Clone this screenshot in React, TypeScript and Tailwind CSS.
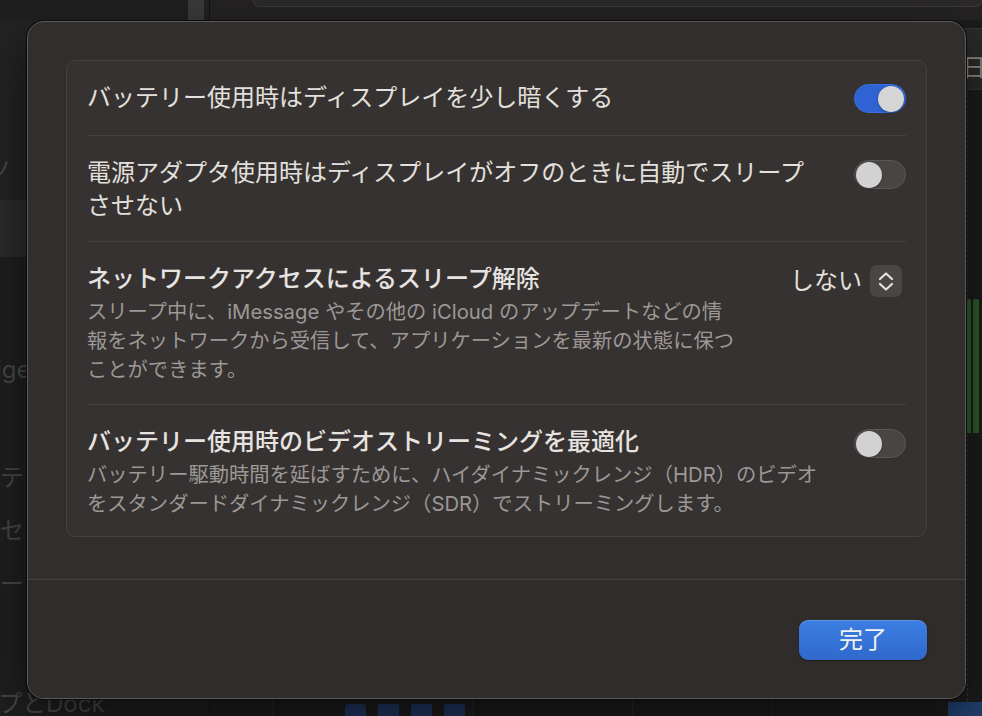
import React from "react";

function Toggle({ on }: { on?: boolean }) {
  if (on) {
    return (
      <div className="mt-[3px] flex h-[29px] w-[52px] shrink-0 items-center justify-end rounded-full border border-[#3b6fdc] bg-[#2f63d3] pr-[1px]">
        <div className="h-[26px] w-[26px] rounded-full bg-[#d5d5d5] shadow-[0_1px_2px_rgba(0,0,0,0.35)]" />
      </div>
    );
  }
  return (
    <div className="mt-[4px] flex h-[29px] w-[52px] shrink-0 items-center rounded-full border border-[#5a5654] bg-[#494543] pl-[1px]">
      <div className="h-[26px] w-[26px] rounded-full bg-[#d2d2d2] shadow-[0_1px_2px_rgba(0,0,0,0.35)]" />
    </div>
  );
}

function Stepper() {
  return (
    <div className="flex h-[32px] w-[32px] items-center justify-center rounded-[7px] bg-[#4a4644]">
      <svg width="32" height="32" viewBox="0 0 32 32" fill="none">
        <path d="M10 14 L16 8.5 L22 14" stroke="#e4e2e0" strokeWidth="2.2" strokeLinecap="round" strokeLinejoin="round" />
        <path d="M10 19 L16 24.5 L22 19" stroke="#e4e2e0" strokeWidth="2.2" strokeLinecap="round" strokeLinejoin="round" />
      </svg>
    </div>
  );
}

function Divider() {
  return <div className="mx-[20px] h-px bg-[#45413f]" />;
}

export default function App() {
  return (
    <div className="relative flex h-[716px] w-[982px] overflow-hidden bg-[#1c1c1c] font-[family-name:Inter,'Noto_Sans_CJK_JP',sans-serif]">
      {/* Sidebar (background window) */}
      <aside className="flex w-[210px] shrink-0 flex-col border-r border-[#111] bg-[#1f1f1f] text-[24px] leading-[30px] text-[#474747]">
        <div className="flex h-[20px] shrink-0">
          <div className="w-[188px] bg-[#202020]" />
          <div className="w-[16px] bg-[#3a3a3a]" />
          <div className="flex-1 bg-[#222]" />
        </div>
        <div className="flex h-[180px] shrink-0 flex-col bg-[#232323] pt-[135px]">
          <div className="-ml-[14px]">ツ</div>
        </div>
        <div className="h-[57px] shrink-0 bg-[#2b2b2b]" />
        <div className="flex flex-col pt-[98px]">
          <div className="-ml-[4px] h-[108px]">ige</div>
          <div className="-ml-[24px] h-[53px]">リテ</div>
          <div className="-ml-[24px] h-[53px]">ンセ</div>
          <div className="-ml-[24px] h-[120px]">ター</div>
          <div className="-ml-[2px] whitespace-nowrap">プとDock</div>
        </div>
      </aside>

      {/* Main area (background window) */}
      <main className="relative flex flex-1 flex-col bg-[#1c1c1c]">
        <div className="h-[20px] bg-[#242222]">
          <div className="ml-[43px] h-[7px] rounded-b-[8px] border-x border-b border-[#3c3a39] bg-[#2b2929]" />
        </div>
        <div className="absolute left-[750px] top-[28px] h-[62px] w-[30px] border-y border-[#353535] bg-[#2a2a2a] pl-[2px] pt-[24px] text-[24px] leading-[30px] text-[#8a8a8a]">
          日
        </div>
        <div className="absolute left-[757px] top-[90px] h-[626px] border-l border-dashed border-[#333]" />
        <div className="absolute left-[757px] top-[299px] flex gap-[2px]">
          <div className="h-[134px] w-[4px] rounded-t-[2px] bg-[#2e5a2a]" />
          <div className="h-[134px] w-[6px] rounded-t-[2px] bg-[#2e5a2a]" />
        </div>
        <div className="absolute left-[135px] top-[704px] flex gap-[12px]">
          <div className="h-[14px] w-[21px] rounded-t-[4px] bg-[#1f365f]" />
          <div className="h-[14px] w-[21px] bg-[#1f365f]" />
          <div className="h-[14px] w-[21px] bg-[#1f365f]" />
          <div className="h-[14px] w-[21px] bg-[#1f365f]" />
        </div>
        <div className="absolute left-[738px] top-[702px] h-[16px] w-[40px] bg-[#22406e]" />
        <div className="absolute left-[62px] top-[690px] h-[30px] border-l border-dashed border-[#2c2c2c]" />
        <div className="absolute left-[262px] top-[690px] h-[30px] border-l border-dashed border-[#2c2c2c]" />
        <div className="absolute left-[422px] top-[690px] h-[30px] border-l border-[#2a2a2a]" />
        <div className="absolute left-[562px] top-[690px] h-[30px] border-l border-dashed border-[#2c2c2c]" />
      </main>

      {/* Sheet dialog */}
      <div className="absolute left-[27px] top-[21px] flex h-[678px] w-[939px] flex-col overflow-hidden rounded-[17px] border border-[#5c5957] bg-[#312e2d] shadow-[0_0_0_1px_#0b0b0b,0_18px_50px_rgba(0,0,0,0.55)]">
        <div className="px-[38px] pb-[42px] pt-[38px]">
          <div className="rounded-[9px] border border-[#45413f] bg-[#363231]">
            {/* Row 1 */}
            <div className="flex items-start gap-[20px] px-[20px] pb-[21px] pt-[20px]">
              <div className="flex-1 text-[24px] leading-[33px] text-[#e3e0dd]">
                バッテリー使用時はディスプレイを少し暗くする
              </div>
              <Toggle on />
            </div>
            <Divider />
            {/* Row 2 */}
            <div className="flex items-start gap-[20px] px-[20px] pb-[19px] pt-[20px]">
              <div className="flex-1 whitespace-nowrap text-[24px] leading-[33px] text-[#e3e0dd]">
                電源アダプタ使用時はディスプレイがオフのときに自動でスリープ
                <br />
                させない
              </div>
              <Toggle />
            </div>
            <Divider />
            {/* Row 3 */}
            <div className="flex items-start gap-[20px] px-[20px] pb-[20px] pt-[20px]">
              <div className="flex-1">
                <div className="text-[24px] font-medium leading-[33px] text-[#e6e3e0]">
                  ネットワークアクセスによるスリープ解除
                </div>
                <div className="mt-[2px] whitespace-nowrap text-[20.3px] leading-[29px] text-[#9c9895]">
                  スリープ中に、iMessage やその他の iCloud のアップデートなどの情
                  <br />
                  報をネットワークから受信して、アプリケーションを最新の状態に保つ
                  <br />
                  ことができます。
                </div>
              </div>
              <div className="mr-[4px] mt-[3px] flex items-center gap-[8px]">
                <span className="text-[24px] leading-[32px] text-[#e3e0dd]">しない</span>
                <Stepper />
              </div>
            </div>
            <Divider />
            {/* Row 4 */}
            <div className="flex items-start gap-[20px] px-[20px] pb-[18px] pt-[20px]">
              <div className="flex-1">
                <div className="text-[24px] font-medium leading-[33px] text-[#e6e3e0]">
                  バッテリー使用時のビデオストリーミングを最適化
                </div>
                <div className="mt-[2px] whitespace-nowrap text-[20.3px] leading-[29px] text-[#9c9895]">
                  バッテリー駆動時間を延ばすために、ハイダイナミックレンジ（HDR）のビデオ
                  <br />
                  をスタンダードダイナミックレンジ（SDR）でストリーミングします。
                </div>
              </div>
              <Toggle />
            </div>
          </div>
        </div>
        <div className="h-px bg-[#46423f]" />
        <div className="flex flex-1 justify-end bg-[#2f2c2b] px-[38px] pt-[40px]">
          <button className="flex h-[40px] w-[128px] items-center justify-center rounded-[9px] bg-gradient-to-b from-[#3c7ee2] to-[#2f69cc] text-[24px] leading-[30px] text-[#f2f2f2] shadow-[inset_0_1px_0_rgba(255,255,255,0.18),0_1px_2px_rgba(0,0,0,0.4)]">
            完了
          </button>
        </div>
      </div>
    </div>
  );
}
